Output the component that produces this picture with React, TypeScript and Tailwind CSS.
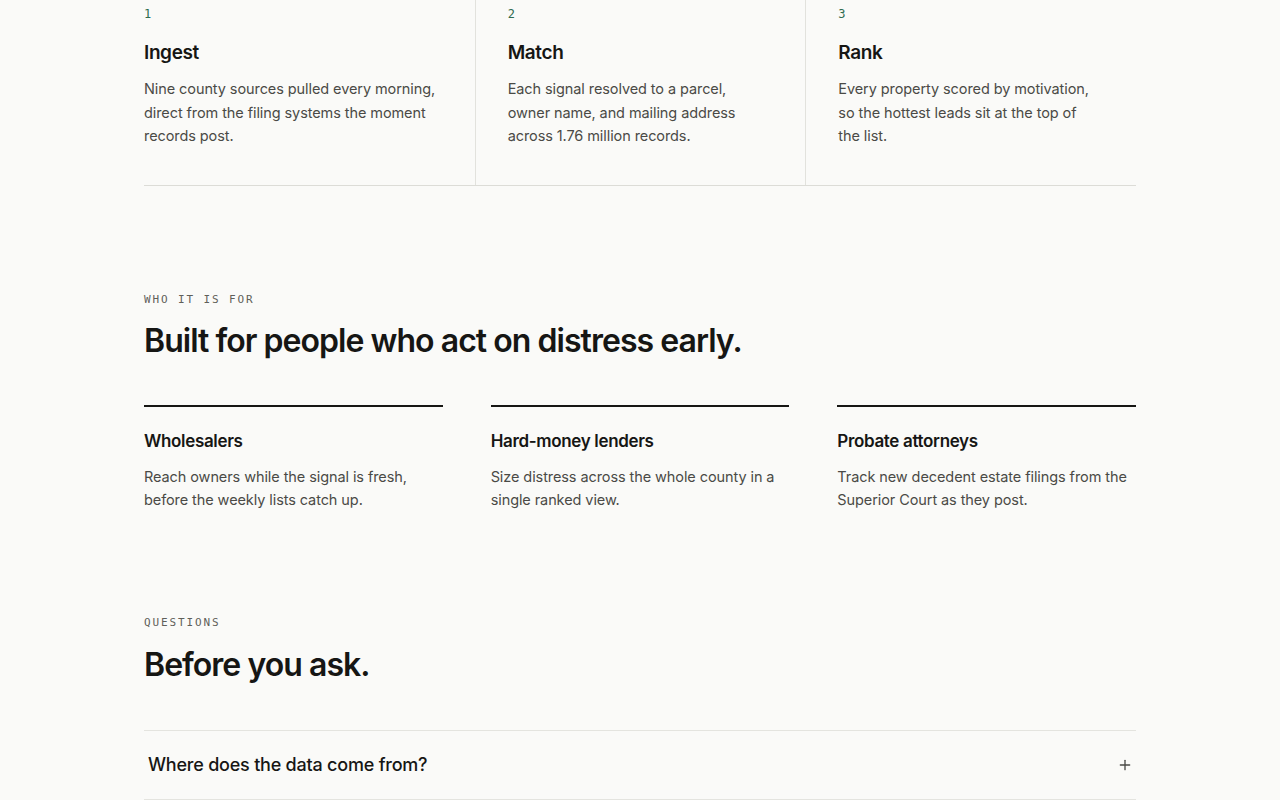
import { Plus } from "lucide-react";

const steps = [
  {
    n: "1",
    title: "Ingest",
    body: "Nine county sources pulled every morning, direct from the filing systems the moment records post.",
  },
  {
    n: "2",
    title: "Match",
    body: "Each signal resolved to a parcel, owner name, and mailing address across 1.76 million records.",
  },
  {
    n: "3",
    title: "Rank",
    body: "Every property scored by motivation, so the hottest leads sit at the top of the list.",
  },
];

const audiences = [
  {
    title: "Wholesalers",
    body: "Reach owners while the signal is fresh, before the weekly lists catch up.",
  },
  {
    title: "Hard-money lenders",
    body: "Size distress across the whole county in a single ranked view.",
  },
  {
    title: "Probate attorneys",
    body: "Track new decedent estate filings from the Superior Court as they post.",
  },
];

const sans = "font-['Inter','Liberation_Sans',sans-serif]";
const mono = "font-['DejaVu_Sans_Mono','Liberation_Mono',monospace]";

function Eyebrow({ children }: { children: React.ReactNode }) {
  return (
    <div className={`${mono} text-[11px] uppercase tracking-[0.17em] text-[#5f5f5a]`}>
      {children}
    </div>
  );
}

export default function App() {
  return (
    <div className={`${sans} min-h-screen bg-[#fafaf8] text-[#161614]`}>
      <div className="mx-auto w-[992px]">
        {/* how it works */}
        <section className="grid grid-cols-3 border-b border-[#dcdcd7]">
          {steps.map((s, i) => (
            <div
              key={s.n}
              className={`pt-[6px] pb-[37px] ${i === 0 ? "pr-8" : "pl-8 pr-10 border-l border-[#e2e2dd]"}`}
            >
              <div className={`${mono} text-[12px] leading-4 text-[#2f6b4f]`}>{s.n}</div>
              <h3 className="mt-[17px] text-[19px] font-semibold leading-7 tracking-[-0.02em]">
                {s.title}
              </h3>
              <p className="mt-[10px] text-[14.5px] leading-[23.5px] tracking-[-0.006em] text-[#4a4a46]">
                {s.body}
              </p>
            </div>
          ))}
        </section>

        {/* who it is for */}
        <section className="pt-[106px]">
          <Eyebrow>Who it is for</Eyebrow>
          <h2 className="mt-[13px] text-[32px] font-semibold leading-10 tracking-[-0.03em]">
            Built for people who act on distress early.
          </h2>
          <div className="mt-[44px] grid grid-cols-3 gap-12">
            {audiences.map((a) => (
              <div key={a.title} className="border-t-2 border-[#161614] pt-[22px]">
                <h3 className="text-[17px] font-semibold leading-6 tracking-[-0.02em]">{a.title}</h3>
                <p className="mt-[12px] text-[14.5px] leading-[23px] tracking-[-0.006em] text-[#4a4a46]">
                  {a.body}
                </p>
              </div>
            ))}
          </div>
        </section>

        {/* faq */}
        <section className="pt-[104px]">
          <Eyebrow>Questions</Eyebrow>
          <h2 className="mt-[13px] text-[32px] font-semibold leading-10 tracking-[-0.03em]">
            Before you ask.
          </h2>
          <div className="mt-[45px] border-t border-[#e4e4df]">
            <button className="flex w-full items-center justify-between border-b border-[#e4e4df] pl-1 pr-[3px] py-[22px] text-left">
              <span className="text-[18px] font-medium leading-6 tracking-[-0.012em]">
                Where does the data come from?
              </span>
              <Plus className="h-4 w-4 text-[#4a4a46]" strokeWidth={2} />
            </button>
          </div>
        </section>
      </div>
    </div>
  );
}
